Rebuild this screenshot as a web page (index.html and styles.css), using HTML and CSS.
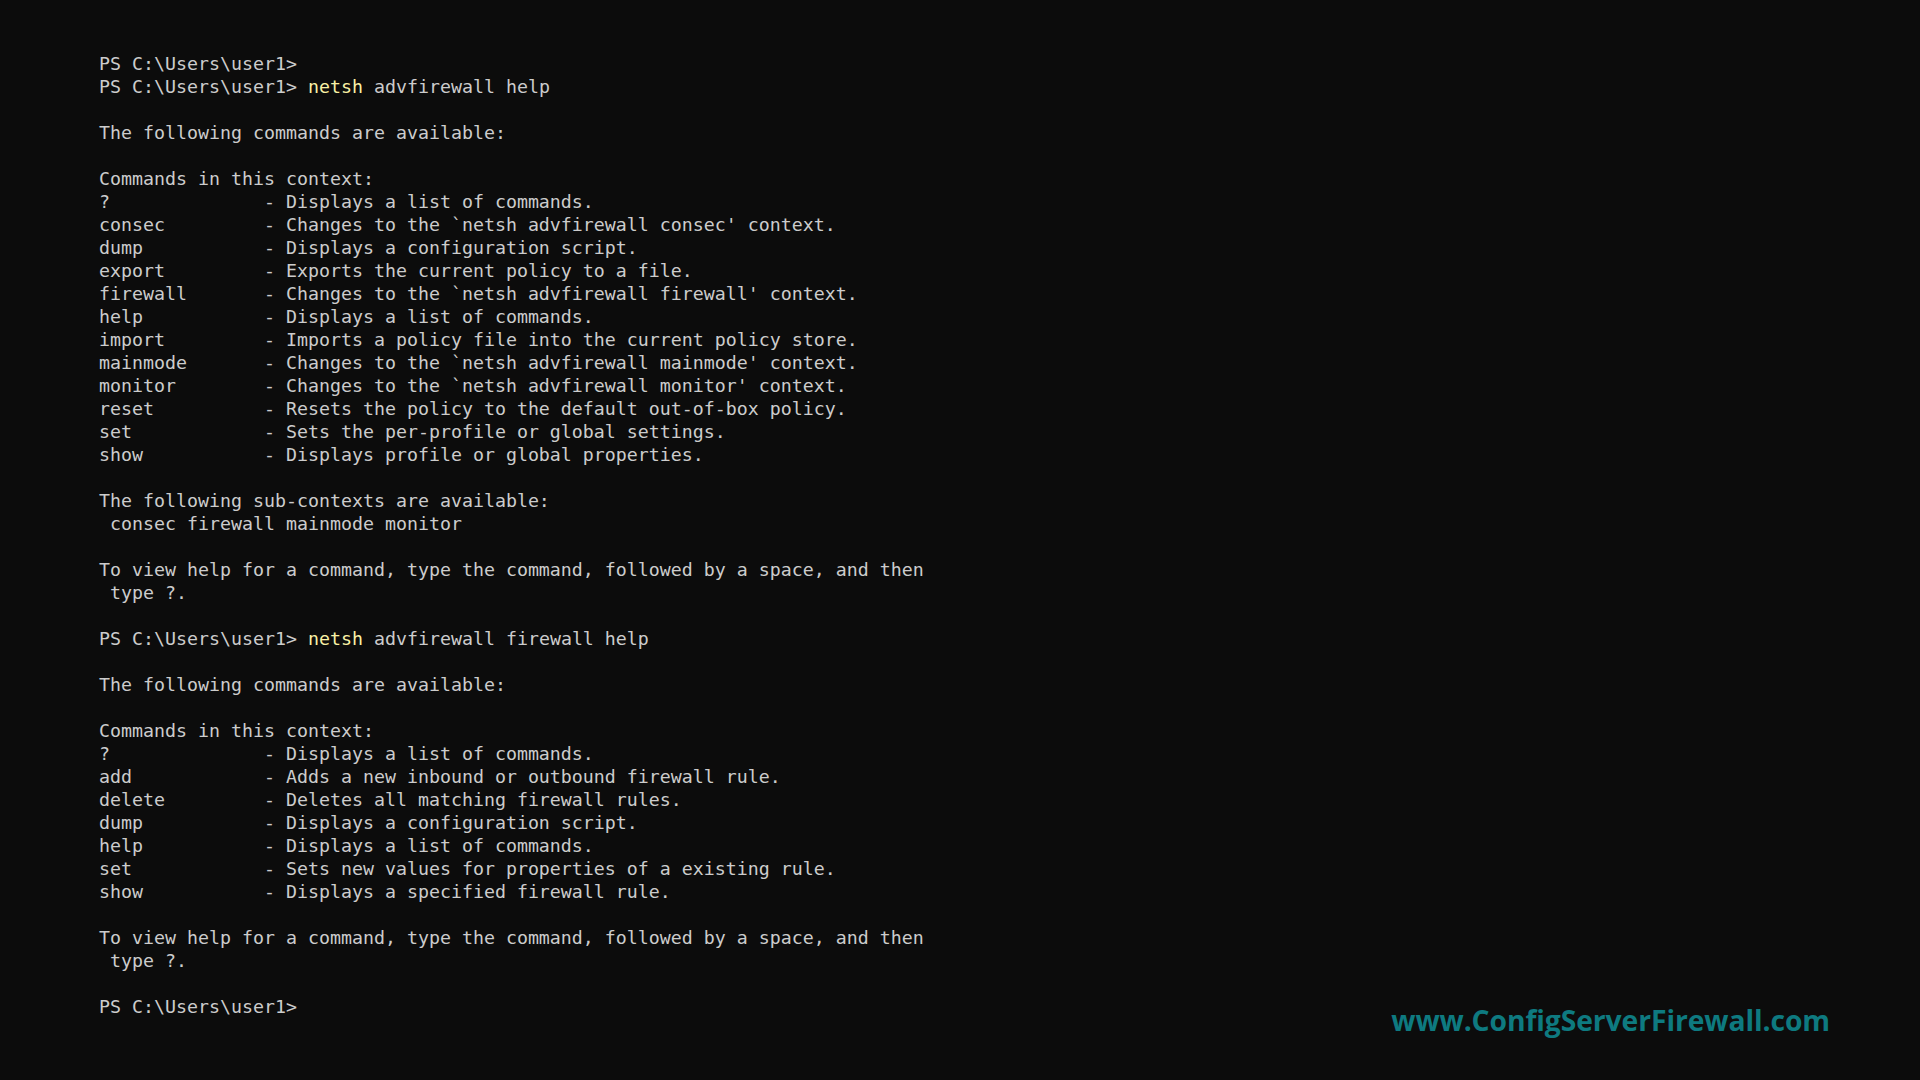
FILE: index.html
```html
<!DOCTYPE html>
<html lang="en">
<head>
    <meta charset="UTF-8">
    <title>netsh advfirewall help</title>
    <link rel="stylesheet" href="styles.css">
</head>
<body>
    <div class="terminal">
        <div class="output">
            <div class="line">PS C:\Users\user1&gt;</div>
            <div class="line"><span>PS C:\Users\user1&gt; </span><span class="cmd">netsh</span><span> advfirewall help</span></div>
            <div class="line"> </div>
            <div class="line">The following commands are available:</div>
            <div class="line"> </div>
            <div class="line">Commands in this context:</div>
            <div class="line">?              - Displays a list of commands.</div>
            <div class="line">consec         - Changes to the `netsh advfirewall consec' context.</div>
            <div class="line">dump           - Displays a configuration script.</div>
            <div class="line">export         - Exports the current policy to a file.</div>
            <div class="line">firewall       - Changes to the `netsh advfirewall firewall' context.</div>
            <div class="line">help           - Displays a list of commands.</div>
            <div class="line">import         - Imports a policy file into the current policy store.</div>
            <div class="line">mainmode       - Changes to the `netsh advfirewall mainmode' context.</div>
            <div class="line">monitor        - Changes to the `netsh advfirewall monitor' context.</div>
            <div class="line">reset          - Resets the policy to the default out-of-box policy.</div>
            <div class="line">set            - Sets the per-profile or global settings.</div>
            <div class="line">show           - Displays profile or global properties.</div>
            <div class="line"> </div>
            <div class="line">The following sub-contexts are available:</div>
            <div class="line"> consec firewall mainmode monitor</div>
            <div class="line"> </div>
            <div class="line">To view help for a command, type the command, followed by a space, and then</div>
            <div class="line"> type ?.</div>
            <div class="line"> </div>
            <div class="line"><span>PS C:\Users\user1&gt; </span><span class="cmd">netsh</span><span> advfirewall firewall help</span></div>
            <div class="line"> </div>
            <div class="line">The following commands are available:</div>
            <div class="line"> </div>
            <div class="line">Commands in this context:</div>
            <div class="line">?              - Displays a list of commands.</div>
            <div class="line">add            - Adds a new inbound or outbound firewall rule.</div>
            <div class="line">delete         - Deletes all matching firewall rules.</div>
            <div class="line">dump           - Displays a configuration script.</div>
            <div class="line">help           - Displays a list of commands.</div>
            <div class="line">set            - Sets new values for properties of a existing rule.</div>
            <div class="line">show           - Displays a specified firewall rule.</div>
            <div class="line"> </div>
            <div class="line">To view help for a command, type the command, followed by a space, and then</div>
            <div class="line"> type ?.</div>
            <div class="line"> </div>
            <div class="line">PS C:\Users\user1&gt;</div>
        </div>
        <div class="watermark">www.ConfigServerFirewall.com</div>
    </div>
</body>
</html>
```

FILE: styles.css
```css
html, body {
    margin: 0;
    padding: 0;
    background: #0c0c0c;
    height: 100%;
}

.terminal {
    position: relative;
    height: 100%;
    box-sizing: border-box;
    padding: 52px 0 0 99px;
}

.output {
    font-family: "DejaVu Sans Mono", monospace;
    font-size: 18.27px;
    color: #cccccc;
}

.line {
    height: 23px;
    line-height: 23px;
    white-space: pre;
}

.cmd {
    color: #f9f1a5;
}

/* site watermark sits over the console, bottom right */
.watermark {
    position: absolute;
    right: 90px;
    top: 1001px;
    font-family: "Open Sans", sans-serif;
    font-weight: 700;
    font-size: 28.3px;
    letter-spacing: -0.1px;
    color: #0e7a80;
}
```
